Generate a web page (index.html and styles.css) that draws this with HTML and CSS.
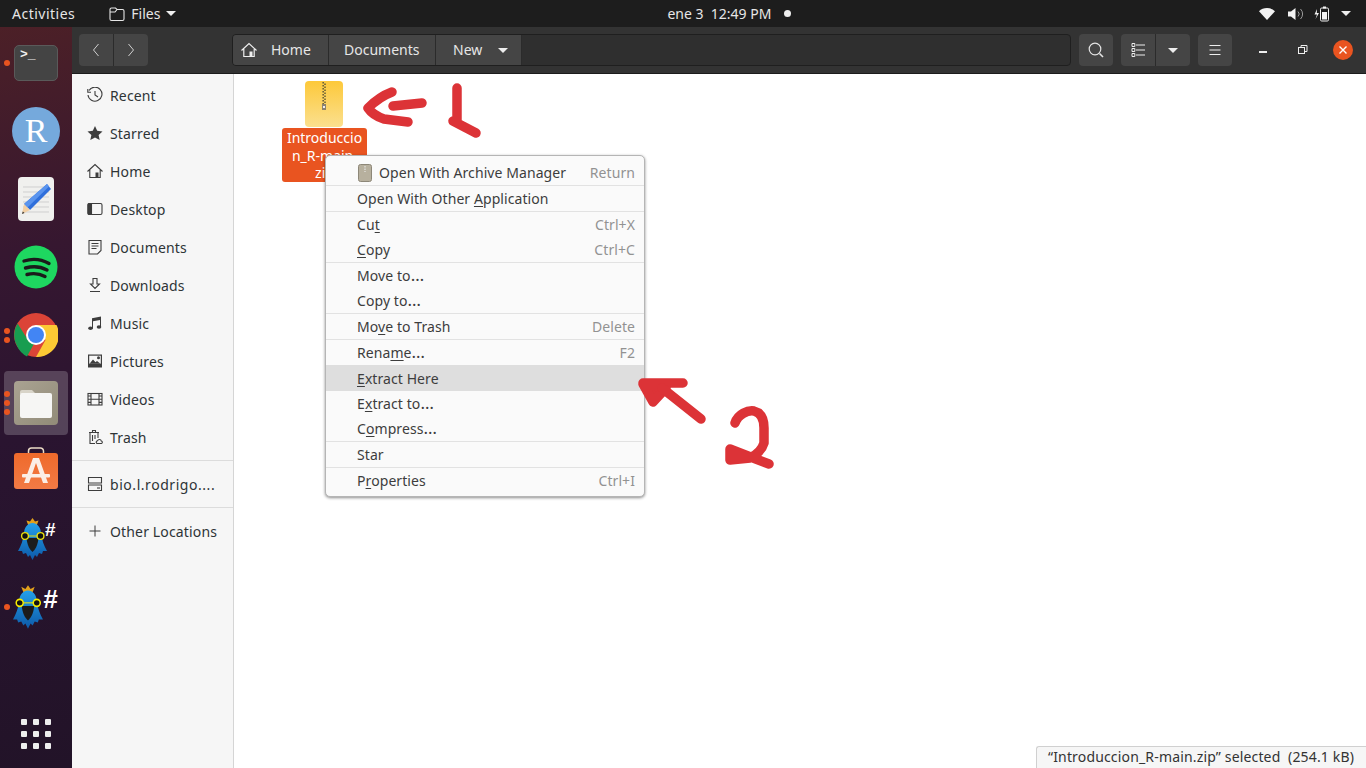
FILE: index.html
```html
<!DOCTYPE html>
<html lang="es">
<head>
<meta charset="utf-8">
<title>Files</title>
<link rel="stylesheet" href="styles.css">
</head>
<body>
<header class="topbar">
  <span class="activities">Activities</span>
  <span class="appmenu">
    <svg class="ico16" viewBox="0 0 16 16" fill="none" stroke="#e6e6e6" stroke-width="1.1"><path d="M1 4.500V13a1.500 1.500 0 0 0 1.500 1.500h11A1.500 1.500 0 0 0 15 13V5a1.500 1.500 0 0 0-1.500-1.500H8L6.500 2H2.500A1.500 1.500 0 0 0 1 3.500z"/><path d="M1 6h5l2-2.500"/></svg>
    <span>Files</span><i class="caret"></i>
  </span>
  <span class="clock">ene 3&nbsp; 12:49 PM</span><i class="clockdot"></i>
  <span class="tray">
    <svg class="wifi" viewBox="0 0 16 12"><path d="M8 12 0 3.200C2 1.200 5 0 8 0s6 1.200 8 3.200z" fill="#f2f2f2"/></svg>
    <svg class="vol" viewBox="0 0 16 14"><path d="M0 4.500h3L7.500 1v12L3 9.500H0z" fill="#f2f2f2"/><path d="M10 4.500a3.500 3.500 0 0 1 0 5M12.500 2a7 7 0 0 1 0 10" fill="none" stroke="#999" stroke-width="1"/></svg>
    <svg class="bat" viewBox="0 0 16 16"><path d="M3 3 .5 8.500H3L1.500 13l3.500-6H2.800z" fill="#f2f2f2"/><rect x="6.500" y="2" width="8" height="13" rx="1.200" fill="none" stroke="#f2f2f2"/><rect x="9" y=".5" width="3" height="2" fill="#f2f2f2"/><rect x="8" y="6" width="5" height="7.500" fill="#f2f2f2"/></svg>
    <i class="caret"></i>
  </span>
</header>

<div class="desktop">
  <nav class="dock">
    <div class="dock-item">
      <i class="dot dot-a"></i>
      <div class="terminal">&gt;_</div>
    </div>
    <div class="dock-item">
      <div class="rstudio">R</div>
    </div>
    <div class="dock-item">
      <svg width="36" height="44" viewBox="0 0 36 44"><rect width="36" height="44" rx="4" fill="#f0f0ee"/><path d="M5 10h26M5 15h26M5 20h26M5 25h26M5 30h26M5 35h26" stroke="#cfcfcf"/><path d="M29 7 33 12 12 33 6 27z" fill="#2f6fdb"/><path d="M29 7 31 9.500 9 31 6 27z" fill="#5a94ee"/><path d="M6 27 12 33 4 37z" fill="#f2cfa3"/><path d="M4.800 34.500 4 37l2.500-1z" fill="#333"/></svg>
    </div>
    <div class="dock-item">
      <svg width="44" height="44" viewBox="0 0 44 44"><circle cx="22" cy="22" r="21.500" fill="#1ed760"/><path d="M10 16c8-2.500 17-2 25 2.500M11.500 23c7-2 15-1.500 21.500 2M13 29.500c6-1.500 12.500-1 18 2" fill="none" stroke="#1b1b1b" stroke-width="3.400" stroke-linecap="round"/></svg>
    </div>
    <div class="dock-item">
      <i class="dot dot-b"></i><i class="dot dot-c"></i>
      <svg width="44" height="44" viewBox="0 0 44 44"><circle cx="22" cy="22" r="22" fill="#db4437"/><path d="M3 33A22 22 0 0 1 3.500 10.500L14 27l8 0-9 16.500A22 22 0 0 1 3 33z" fill="#189d50"/><path d="M22 12h20.500A22 22 0 0 1 22 44l9.500-17z" fill="#fcc934"/><circle cx="22" cy="22" r="10" fill="#fff"/><circle cx="22" cy="22" r="8" fill="#4285f4"/></svg>
    </div>
    <div class="dock-item dock-active">
      <i class="dot dot-d"></i><i class="dot dot-e"></i><i class="dot dot-f"></i>
      <div class="files-tile">
        <svg width="32" height="29" viewBox="0 0 32 29"><path d="M0 3a2 2 0 0 1 2-2h10l4 4H0z" fill="#d8d4c8"/><rect y="4" width="32" height="25" rx="2" fill="#f6f6f4"/></svg>
      </div>
    </div>
    <div class="dock-item">
      <svg class="store" width="44" height="44" viewBox="0 0 44 44"><defs><linearGradient id="bag" x1="0" y1="0" x2="0" y2="1"><stop offset="0" stop-color="#ef6a2b"/><stop offset="1" stop-color="#f27a45"/></linearGradient></defs><path d="M14.500 7V4a3 3 0 0 1 3-3h9a3 3 0 0 1 3 3v3" fill="none" stroke="#ecdcc6" stroke-width="1.500"/><rect y="6" width="44" height="36" rx="3" fill="url(#bag)"/><path d="M19 11h6l9 25h-5l-7-20-7 20h-5z" fill="#fbeee6"/><rect x="8" y="27" width="28" height="3.500" rx="1" fill="#fbeee6"/></svg>
    </div>
    <div class="dock-item">
      <svg class="bird" width="30" height="42" viewBox="0 0 30 42"><defs><linearGradient id="feather" x1="0" y1="0" x2="0" y2="1"><stop offset="0" stop-color="#24a0ea"/><stop offset="1" stop-color="#0d59a8"/></linearGradient></defs><path d="M9 4 8.500 2.500 12 3.500 14.500 0 17 3.500 20.500 2.500 20 4 18 9H11z" fill="#e2a11c"/><path d="M14.500 5C19 5 23 9 23 16 24 22 26 28 29 33L25 33 24 36 21 35 19 39 17 37 14.500 42 12 37 10 39 8 35 5 36 4 33 0 33C3 28 5 22 6 16 6 9 10 5 14.500 5z" fill="url(#feather)"/><path d="M8.500 20H20.500C20 27 17 32 14.500 34 12 32 9 27 8.500 20z" fill="#1c1c1c"/><circle cx="7" cy="18" r="3.400" fill="#111" stroke="#eadf10" stroke-width="1.400"/><circle cx="22.500" cy="18" r="3.400" fill="#111" stroke="#eadf10" stroke-width="1.400"/><path d="M10.500 18h8.500" stroke="#eadf10"/></svg>
      <span class="hash hash-sm">#</span>
    </div>
    <div class="dock-item">
      <i class="dot dot-a"></i>
      <svg class="bird bird-lg" width="31" height="46" viewBox="0 0 30 42"><path d="M9 4 8 1.500 12 3.500 14.500 0 17 3.500 21 1.500 20 4 18 9H11z" fill="#e2a11c"/><path d="M14.500 5C19 5 23 9 23 16 24 22 26 28 29 33L25 33 24 36 21 35 19 39 17 37 14.500 42 12 37 10 39 8 35 5 36 4 33 0 33C3 28 5 22 6 16 6 9 10 5 14.500 5z" fill="url(#feather)"/><path d="M8.500 20H20.500C20 27 17 32 14.500 34 12 32 9 27 8.500 20z" fill="#1c1c1c"/><circle cx="6.500" cy="17" r="3.400" fill="#111" stroke="#f8ec00" stroke-width="1.500"/><circle cx="23" cy="17" r="3.400" fill="#111" stroke="#f8ec00" stroke-width="1.500"/><path d="M10 17h9.500" stroke="#f8ec00"/></svg>
      <span class="hash hash-lg">#</span>
    </div>
    <div class="apps-grid">
      <i></i><i></i><i></i><i></i><i></i><i></i><i></i><i></i><i></i>
    </div>
  </nav>

  <main class="window">
    <div class="headerbar">
      <div class="nav-group">
        <span class="tb-btn tb-nav"><svg class="ico-nav" viewBox="0 0 8 14" fill="none" stroke="#d0d0d0" stroke-width="1"><path d="M6.500 1 1.500 7l5 6"/></svg></span>
        <span class="tb-btn tb-nav"><svg class="ico-nav" viewBox="0 0 8 14" fill="none" stroke="#d0d0d0" stroke-width="1"><path d="M1.500 1l5 6-5 6"/></svg></span>
      </div>
      <div class="pathbar">
        <span class="crumb crumb-home">
          <svg class="ico16" viewBox="0 0 16 16" fill="none" stroke="#eee" stroke-width="1.200"><path d="M.5 8.500 8 1.500l7.500 7M2.800 7v7.500h10.400V7"/><rect x="8.500" y="9.500" width="3" height="5" fill="#eee" stroke="none"/></svg>
          <span class="crumb-text">Home</span>
        </span>
        <span class="crumb crumb-docs"><span class="crumb-text">Documents</span></span>
        <span class="crumb crumb-new"><span class="crumb-text">New</span><i class="caret"></i></span>
      </div>
      <span class="tb-btn tb-search"><svg class="ico16" viewBox="0 0 16 16" fill="none" stroke="#e4e4e4" stroke-width="1.200"><circle cx="7" cy="7" r="5.800"/><path d="M11.500 11.500 15 15" stroke-width="1.600"/></svg></span>
      <div class="view-group">
        <span class="tb-btn tb-view"><svg class="ico16" viewBox="0 0 16 16" fill="#eee"><path d="M6 2.500h9v1H6zM6 7.500h9v1H6zM6 12.500h9v1H6z"/><path d="M2 1.500h2.800v3H2zM2 6.500h2.800v3H2zM2 11.500h2.800v3H2z" fill="none" stroke="#eee"/></svg></span>
        <span class="tb-btn tb-drop"><i class="caret"></i></span>
      </div>
      <span class="tb-btn tb-search"><svg class="ico16" viewBox="0 0 16 16" fill="#eee"><path d="M2.500 3h11v1h-11zM2.500 7.500h11v1h-11zM2.500 12h11v1h-11z"/></svg></span>
      <div class="winctl">
        <span class="winbtn"><i class="win-min"></i></span>
        <span class="winbtn"><svg width="10" height="10" viewBox="0 0 10 10" fill="none" stroke="#eee"><rect x=".5" y="2.500" width="6" height="6"/><path d="M3 2.500V.5h6v6H7"/></svg></span>
        <span class="winbtn"><span class="win-close"><svg width="10" height="10" viewBox="0 0 10 10" stroke="#fff" stroke-width="1.400"><path d="M1.500 1.500l7 7M8.500 1.500l-7 7"/></svg></span></span>
      </div>
    </div>

    <div class="body">
      <aside class="sidebar">
        <div class="side-row"><svg class="ico16" viewBox="0 0 16 16" fill="none" stroke="#3d3d3d" stroke-width="1.100"><path d="M2 3.500A7 7 0 1 1 1 8"/><path d="M.8 2v3.200H4" /><path d="M8 4v4l3 2"/></svg><span>Recent</span></div>
        <div class="side-row"><svg class="ico16" viewBox="0 0 16 16" fill="#3d3d3d"><path d="M8 1l2.200 4.800 5.300.6-3.900 3.500 1.100 5.200L8 12.500l-4.700 2.600 1.100-5.200L.5 6.400l5.300-.6z"/></svg><span>Starred</span></div>
        <div class="side-row"><svg class="ico16" viewBox="0 0 16 16" fill="none" stroke="#3d3d3d" stroke-width="1.100"><path d="M.5 8.500 8 1.500l7.500 7M2.800 7v7.500h10.400V7"/><rect x="8.500" y="9.500" width="3" height="5" fill="#3d3d3d" stroke="none"/></svg><span>Home</span></div>
        <div class="side-row"><svg class="ico16" viewBox="0 0 16 16" fill="none" stroke="#3d3d3d" stroke-width="1.100"><rect x="1" y="2.500" width="14" height="11" rx="1.500"/><path d="M1 3.500a1 1 0 0 1 1-1h2.500v11H2a1 1 0 0 1-1-1z" fill="#3d3d3d"/></svg><span>Desktop</span></div>
        <div class="side-row"><svg class="ico16" viewBox="0 0 16 16" fill="none" stroke="#3d3d3d" stroke-width="1.100"><path d="M2 1.500h12v10l-3.500 3.500H2z"/><path d="M4.500 4.500h7M4.500 7h7M4.500 9.500h5"/></svg><span>Documents</span></div>
        <div class="side-row"><svg class="ico16" viewBox="0 0 16 16" fill="none" stroke="#3d3d3d" stroke-width="1.100"><path d="M6 1.500h4v5.500h2.500L8 11.500 3.500 7H6zM3 14.500h10"/></svg><span>Downloads</span></div>
        <div class="side-row"><svg class="ico16" viewBox="0 0 16 16" fill="#3d3d3d"><path d="M5 3.200 14 1.500v10.500h-1V5L6 6.300V13.500H5z"/><ellipse cx="3.500" cy="13.300" rx="2.300" ry="1.800"/><ellipse cx="12" cy="12" rx="2.300" ry="1.800"/></svg><span>Music</span></div>
        <div class="side-row"><svg class="ico16" viewBox="0 0 16 16"><path d="M1 1.500h14v13H1z" fill="#3d3d3d"/><path d="M2.200 2.700h11.600v8H2.200z" fill="#f6f6f6"/><path d="M2.500 10.800 6 6.500l2.500 2.800 1.500-1.300 3.500 2.800z" fill="#3d3d3d"/><circle cx="11.500" cy="4.800" r="1.500" fill="#3d3d3d"/></svg><span>Pictures</span></div>
        <div class="side-row"><svg class="ico16" viewBox="0 0 16 16" fill="none" stroke="#3d3d3d" stroke-width="1.100"><rect x="1" y="2.500" width="14" height="11.500"/><path d="M4 2.500V14M12 2.500V14M1 5h3M1 8.200h3M1 11.400h3M12 5h3M12 8.200h3M12 11.400h3M4 8.200h8"/></svg><span>Videos</span></div>
        <div class="side-row"><svg class="ico16" viewBox="0 0 16 16" fill="none" stroke="#3d3d3d" stroke-width="1.100"><path d="M2 3.500h10M5.500 3.500V1.500h3v2M3 3.500V14.500h5M11 3.500V9M5.500 6v6M8 6v4"/><path d="M10 14.500a1.500 1.500 0 0 1 .5-2.800 2 2 0 0 1 3.800.3 1.300 1.300 0 0 1 .2 2.500z"/></svg><span>Trash</span></div>
        <hr class="side-sep">
        <div class="side-row side-bio"><svg class="ico16" viewBox="0 0 16 16" fill="none" stroke="#3d3d3d" stroke-width="1.100"><path d="M1.500 1.500h13v5.500h-13zM1.500 9h13v5.500h-13z"/><path d="M10 12h3"/></svg><span>bio.l.rodrigo....</span></div>
        <hr class="side-sep">
        <div class="side-row"><svg class="ico16" viewBox="0 0 16 16" stroke="#3d3d3d" stroke-width="1"><path d="M8 2.500v11M2.500 8h11"/></svg><span>Other Locations</span></div>
      </aside>
      <section class="content">
        <div class="file">
          <svg class="zip" width="38" height="46" viewBox="0 0 38 46"><defs><linearGradient id="zipg" x1="0" y1="0" x2="0" y2="1"><stop offset="0" stop-color="#fdc93a"/><stop offset="1" stop-color="#fbe08f"/></linearGradient></defs><rect width="38" height="46" rx="4" fill="url(#zipg)"/><path d="M18.200 1v22" stroke="#6b6138" stroke-width="1.600" stroke-dasharray="1.500 1.500"/><path d="M20 2.500v21" stroke="#6b6138" stroke-width="1.600" stroke-dasharray="1.500 1.500"/><rect x="17" y="23" width="4" height="6" fill="#8a8270"/><rect x="18" y="25" width="2" height="2" fill="#eee"/></svg>
          <div class="file-label">Introduccio<br>n_R-main.<br>zip</div>
        </div>
      </section>
    </div>

    <div class="statusbar">“Introduccion_R-main.zip” selected&nbsp; (254.1 kB)</div>
  </main>
</div>

<div class="menu">
  <div class="mi"><span class="mi-open"><svg class="arch" width="14" height="18" viewBox="0 0 14 18"><rect x=".5" y=".5" width="13" height="17" rx="2" fill="#b7b09e" stroke="#8d8778"/><path d="M7 2v6" stroke="#eee" stroke-dasharray="1.500 1"/></svg>Open With Archive Manager</span><span class="acc">Return</span></div>
  <hr class="msep">
  <div class="mi"><span>Open With Other <u>A</u>pplication</span></div>
  <hr class="msep">
  <div class="mi"><span>Cu<u>t</u></span><span class="acc">Ctrl+X</span></div>
  <div class="mi"><span><u>C</u>opy</span><span class="acc">Ctrl+C</span></div>
  <hr class="msep">
  <div class="mi"><span>Move to<span class="ell">…</span></span></div>
  <div class="mi"><span>Copy to<span class="ell">…</span></span></div>
  <hr class="msep">
  <div class="mi"><span>Mo<u>v</u>e to Trash</span><span class="acc">Delete</span></div>
  <hr class="msep">
  <div class="mi"><span>Rena<u>m</u>e<span class="ell">…</span></span><span class="acc">F2</span></div>
  <div class="mi mi-hover"><span><u>E</u>xtract Here</span></div>
  <div class="mi"><span>E<u>x</u>tract to<span class="ell">…</span></span></div>
  <div class="mi"><span>C<u>o</u>mpress<span class="ell">…</span></span></div>
  <hr class="msep">
  <div class="mi"><span>Star</span></div>
  <hr class="msep">
  <div class="mi"><span>P<u>r</u>operties</span><span class="acc">Ctrl+I</span></div>
</div>

<svg class="annot" width="1366" height="768" viewBox="0 0 1366 768" fill="none" stroke="#dc3337" stroke-width="9.500" stroke-linecap="round" stroke-linejoin="round">
  <path d="M392 92C384 95 374 102 368 108 372 114 378 117 384 119L408 122"/>
  <path d="M393 106 422 103"/>
  <path d="M457 88V120M453 121 476 133"/>
  <path d="M643 383H683M643 384 653 402 666 388Z" fill="#dc3337"/>
  <path d="M662 388 701 419"/>
  <path d="M735 423C738 414 748 410 754 411 762 413 764 420 764 428V443C762 450 756 455 750 458L730 460V449L748 456 769 464"/>
</svg>
</body>
</html>
```

FILE: styles.css
```css
* { box-sizing: border-box; }
html, body { margin: 0; padding: 0; }
body {
  width: 1366px;
  height: 768px;
  overflow: hidden;
  font-family: "Noto Sans", "Open Sans", sans-serif;
  font-size: 14px;
  position: relative;
  display: flex;
  flex-direction: column;
  background: #fff;
}
.ico16 { width: 16px; height: 16px; flex: none; }
.caret {
  display: inline-block;
  width: 0;
  height: 0;
  border-left: 5px solid transparent;
  border-right: 5px solid transparent;
  border-top: 5px solid #eee;
}

/* top bar */
.topbar {
  height: 27px;
  flex: none;
  background: #1d1d1d;
  color: #e6e6e6;
  display: flex;
  align-items: center;
  font-size: 14px;
}
.activities { margin-left: 12px; letter-spacing: .5px; }
.appmenu { margin-left: 34px; display: flex; align-items: center; gap: 6px; }
.clock { margin-left: 491px; }
.clockdot { width: 7px; height: 7px; border-radius: 50%; background: #eee; margin-left: 13px; }
.tray { margin-left: auto; margin-right: 15px; display: flex; align-items: center; }
.wifi { width: 16px; height: 12px; }
.vol { width: 16px; height: 14px; margin-left: 13px; }
.bat { width: 16px; height: 16px; margin-left: 10px; }
.tray .caret { margin-left: 11px; }

/* desktop layout */
.desktop { flex: 1; display: flex; min-height: 0; }
.dock {
  width: 72px;
  flex: none;
  background: linear-gradient(170deg, #4c2027 0%, #361730 30%, #2a1430 55%, #221328 100%);
  display: flex;
  flex-direction: column;
  align-items: stretch;
  padding-top: 2px;
}
.dock-item {
  height: 68px;
  position: relative;
  display: flex;
  align-items: center;
  justify-content: center;
  flex: none;
}
.dock-active::before {
  content: "";
  position: absolute;
  left: 4px;
  right: 4px;
  top: 2px;
  bottom: 2px;
  background: rgba(255, 255, 255, .2);
  border-radius: 4px;
}
.dot {
  position: absolute;
  left: 4px;
  width: 6px;
  height: 6px;
  border-radius: 50%;
  background: #e95420;
}
.dot-a { top: 31px; }
.dot-b { top: 27px; }
.dot-c { top: 36px; }
.dot-d { top: 22px; }
.dot-e { top: 31px; }
.dot-f { top: 40px; }
.terminal {
  width: 44px;
  height: 36px;
  border-radius: 5px;
  background: #444;
  border: 1px solid #5a5a5a;
  color: #f0f0f0;
  font-family: "Liberation Mono", monospace;
  font-weight: 700;
  font-size: 13px;
  line-height: 12px;
  padding: 3px 0 0 5px;
}
.rstudio {
  width: 48px;
  height: 48px;
  border-radius: 50%;
  background: #75a9dc;
  color: #fff;
  font-family: "Liberation Serif", serif;
  font-size: 34px;
  line-height: 48px;
  text-align: center;
}
.files-tile {
  width: 44px;
  height: 44px;
  border-radius: 4px;
  background: linear-gradient(135deg, #aaa392, #918b78);
  position: relative;
  display: flex;
  align-items: center;
  justify-content: center;
}
.store { margin-top: -4px; }
.bird { margin-right: 7px; }
.bird-lg { margin-right: 15px; }
.hash { position: absolute; color: #fff; font-weight: 700; line-height: 1; font-family: "Liberation Sans", sans-serif; }
.hash-sm { font-size: 19px; left: 45px; top: 15px; }
.hash-lg { font-size: 26px; left: 43px; top: 13px; font-style: italic; }
.apps-grid {
  margin-top: auto;
  margin-bottom: 19px;
  align-self: center;
  display: grid;
  grid-template-columns: repeat(3, 6px);
  gap: 6px;
  height: 30px;
}
.apps-grid i { width: 6px; height: 6px; background: #eee; border-radius: 1px; }

/* window */
.window { flex: 1; display: flex; flex-direction: column; min-width: 0; position: relative; }
.headerbar {
  height: 47px;
  flex: none;
  background: #333;
  border-bottom: 1px solid #1c1c1c;
  display: flex;
  align-items: center;
  padding: 0 3px 0 7px;
}
.tb-btn {
  height: 32px;
  background: #454545;
  display: flex;
  align-items: center;
  justify-content: center;
  border-radius: 4px;
  flex: none;
}
.nav-group { display: flex; width: 153px; flex: none; }
.tb-nav { width: 34.500px; border-radius: 0; }
.tb-nav:first-child { border-radius: 4px 0 0 4px; border-right: 1px solid #2b2b2b; }
.tb-nav:last-child { border-radius: 0 4px 4px 0; }
.ico-nav { width: 8px; height: 14px; }
.pathbar {
  width: 839px;
  flex: none;
  height: 32px;
  display: flex;
  background: #2f2f2f;
  border: 1px solid #1f1f1f;
  border-radius: 4px;
  color: #e6e6e6;
  overflow: hidden;
}
.crumb {
  background: #454545;
  border-right: 1px solid #2b2b2b;
  display: flex;
  align-items: center;
  flex: none;
}
.crumb-text { position: relative; top: -1px; }
.crumb-home { width: 96px; padding-left: 8px; gap: 14px; }
.crumb-docs { width: 107px; padding-left: 15px; }
.crumb-new { width: 86px; padding-left: 17px; gap: 16px; }
.tb-search { width: 34px; margin-left: 8px; }
.view-group { display: flex; margin-left: 8px; flex: none; }
.tb-view { width: 35px; border-radius: 4px 0 0 4px; border-right: 1px solid #2b2b2b; }
.tb-drop { width: 34px; border-radius: 0 4px 4px 0; }
.winctl { display: flex; margin-left: auto; }
.winbtn { width: 40px; height: 32px; display: flex; align-items: center; justify-content: center; }
.win-min { width: 8px; height: 1.500px; background: #eee; margin-top: 4px; }
.win-close {
  width: 20px;
  height: 20px;
  border-radius: 50%;
  background: #e95420;
  display: flex;
  align-items: center;
  justify-content: center;
}

.body { flex: 1; display: flex; min-height: 0; }
.sidebar {
  width: 162px;
  flex: none;
  background: #f6f6f6;
  border-right: 1px solid #d5d5d5;
  padding-top: 2px;
  color: #2e3436;
  letter-spacing: .15px;
}
.side-row { height: 38px; display: flex; align-items: center; padding-left: 15px; gap: 7px; }
.side-bio { letter-spacing: .55px; }
.side-sep { margin: 4px 0 4px; border: 0; border-top: 1px solid #dcdcdc; height: 0; }
.content { flex: 1; background: #fff; padding: 7px 0 0 48px; }
.file { width: 85px; display: flex; flex-direction: column; align-items: center; }
.zip { flex: none; margin-right: 1px; }
.file-label {
  width: 85px;
  height: 54px;
  margin-top: 1px;
  background: #e95420;
  border-radius: 3px;
  color: #fff;
  text-align: center;
  font-size: 14px;
  line-height: 17.500px;
  padding-top: 1px;
}
.statusbar {
  position: absolute;
  right: 0;
  bottom: 0;
  width: 330px;
  height: 22px;
  background: #f6f6f6;
  border: 1px solid #d0d0d0;
  border-width: 1px 0 0 1px;
  border-radius: 3px 0 0 0;
  color: #333;
  font-size: 14px;
  line-height: 19px;
  letter-spacing: .16px;
  padding-left: 11px;
  white-space: nowrap;
}

/* context menu */
.menu {
  position: absolute;
  left: 325px;
  top: 155px;
  width: 320px;
  height: 342px;
  background: #fafafa;
  border: 1px solid #b5b5b5;
  border-radius: 5px;
  box-shadow: 0 1px 3px rgba(0, 0, 0, .45);
  padding: 4px 0 3px;
  color: #3d3d3d;
  font-size: 14px;
  letter-spacing: .08px;
}
.mi {
  height: 25px;
  display: flex;
  align-items: center;
  justify-content: space-between;
  padding: 0 9px 0 31px;
  white-space: nowrap;
}
.mi-hover { background: #dedede; height: 26px; }
.mi-open { display: flex; align-items: center; }
.arch { margin: 0 7px 0 1px; }
.acc { color: #929292; }
.ell { font-size: 17px; line-height: 0; }
.msep { border: 0; border-top: 1px solid #e2e2e2; height: 0; margin: 0; }
.mi u { text-underline-offset: 2px; }

.annot { position: absolute; left: 0; top: 0; pointer-events: none; }
```
